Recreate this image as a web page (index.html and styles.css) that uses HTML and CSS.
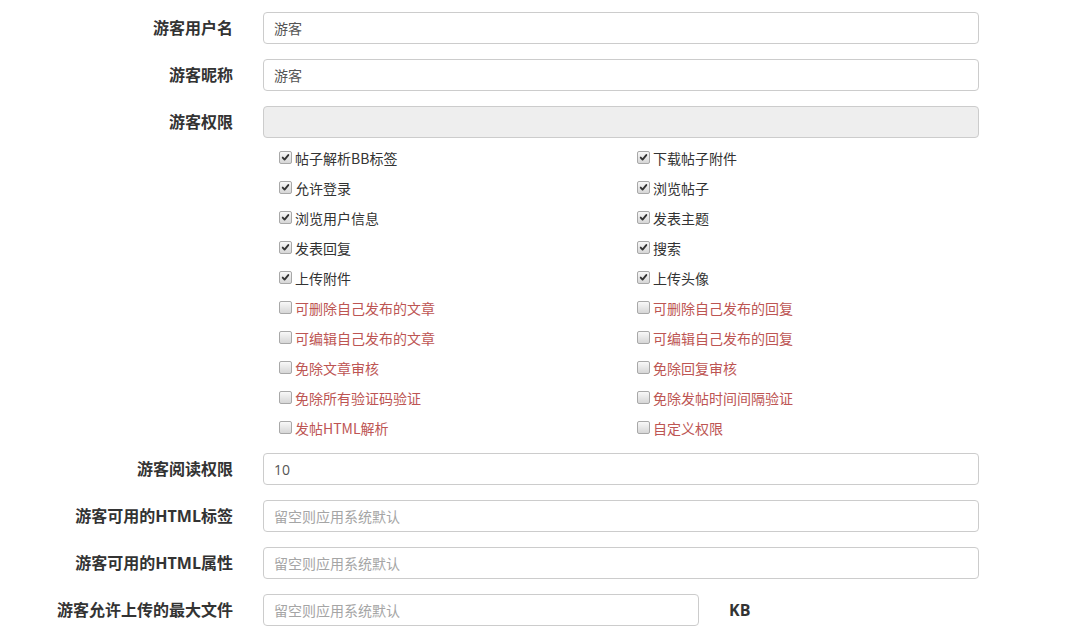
FILE: index.html
```html
<!DOCTYPE html>
<html lang="zh">
<head>
<meta charset="utf-8">
<link rel="stylesheet" href="styles.css">
</head>
<body>
<form class="form">
  <div class="row">
    <label class="lbl">游客用户名</label>
    <div class="ctl"><input class="inp" type="text" value="游客"></div>
  </div>
  <div class="row">
    <label class="lbl">游客昵称</label>
    <div class="ctl"><input class="inp" type="text" value="游客"></div>
  </div>
  <div class="row perm-row">
    <label class="lbl">游客权限</label>
    <div class="ctl">
      <input class="inp inp-disabled" type="text" disabled>
      <div class="perms">
        <div class="perm"><span class="cb on"><svg viewBox="0 0 13 13"><path d="M3.2 6.6 L5.4 9 L9.8 3.6" /></svg></span>帖子解析BB标签</div>
        <div class="perm"><span class="cb on"><svg viewBox="0 0 13 13"><path d="M3.2 6.6 L5.4 9 L9.8 3.6" /></svg></span>下载帖子附件</div>
        <div class="perm"><span class="cb on"><svg viewBox="0 0 13 13"><path d="M3.2 6.6 L5.4 9 L9.8 3.6" /></svg></span>允许登录</div>
        <div class="perm"><span class="cb on"><svg viewBox="0 0 13 13"><path d="M3.2 6.6 L5.4 9 L9.8 3.6" /></svg></span>浏览帖子</div>
        <div class="perm"><span class="cb on"><svg viewBox="0 0 13 13"><path d="M3.2 6.6 L5.4 9 L9.8 3.6" /></svg></span>浏览用户信息</div>
        <div class="perm"><span class="cb on"><svg viewBox="0 0 13 13"><path d="M3.2 6.6 L5.4 9 L9.8 3.6" /></svg></span>发表主题</div>
        <div class="perm"><span class="cb on"><svg viewBox="0 0 13 13"><path d="M3.2 6.6 L5.4 9 L9.8 3.6" /></svg></span>发表回复</div>
        <div class="perm"><span class="cb on"><svg viewBox="0 0 13 13"><path d="M3.2 6.6 L5.4 9 L9.8 3.6" /></svg></span>搜索</div>
        <div class="perm"><span class="cb on"><svg viewBox="0 0 13 13"><path d="M3.2 6.6 L5.4 9 L9.8 3.6" /></svg></span>上传附件</div>
        <div class="perm"><span class="cb on"><svg viewBox="0 0 13 13"><path d="M3.2 6.6 L5.4 9 L9.8 3.6" /></svg></span>上传头像</div>
        <div class="perm danger"><span class="cb"></span>可删除自己发布的文章</div>
        <div class="perm danger"><span class="cb"></span>可删除自己发布的回复</div>
        <div class="perm danger"><span class="cb"></span>可编辑自己发布的文章</div>
        <div class="perm danger"><span class="cb"></span>可编辑自己发布的回复</div>
        <div class="perm danger"><span class="cb"></span>免除文章审核</div>
        <div class="perm danger"><span class="cb"></span>免除回复审核</div>
        <div class="perm danger"><span class="cb"></span>免除所有验证码验证</div>
        <div class="perm danger"><span class="cb"></span>免除发帖时间间隔验证</div>
        <div class="perm danger"><span class="cb"></span>发帖HTML解析</div>
        <div class="perm danger"><span class="cb"></span>自定义权限</div>
      </div>
    </div>
  </div>
  <div class="row">
    <label class="lbl">游客阅读权限</label>
    <div class="ctl"><input class="inp" type="text" value="10"></div>
  </div>
  <div class="row">
    <label class="lbl">游客可用的HTML标签</label>
    <div class="ctl"><input class="inp" type="text" placeholder="留空则应用系统默认"></div>
  </div>
  <div class="row">
    <label class="lbl">游客可用的HTML属性</label>
    <div class="ctl"><input class="inp" type="text" placeholder="留空则应用系统默认"></div>
  </div>
  <div class="row">
    <label class="lbl">游客允许上传的最大文件</label>
    <div class="ctl ctl-unit">
      <input class="inp inp-half" type="text" placeholder="留空则应用系统默认">
      <span class="unit">KB</span>
    </div>
  </div>
</form>
</body>
</html>
```

FILE: styles.css
```css
html, body {
  margin: 0;
  padding: 0;
  background: #fff;
}
body {
  font-family: "Open Sans", "Noto Sans CJK SC", sans-serif;
  color: #333;
}
.form {
  display: flex;
  flex-direction: column;
  gap: 15px;
  padding-top: 12px;
}
.row {
  display: grid;
  grid-template-columns: 233px 716px;
  column-gap: 30px;
  align-items: start;
}
.lbl {
  font-weight: bold;
  font-size: 16px;
  line-height: 32px;
  height: 32px;
  text-align: right;
  white-space: nowrap;
  color: #333;
}
.ctl {
  display: flex;
  flex-direction: column;
}
.inp {
  box-sizing: border-box;
  width: 100%;
  height: 32px;
  margin: 0;
  padding: 0 10px;
  border: 1px solid #ccc;
  border-radius: 4px;
  font-family: "Open Sans", "Noto Sans CJK SC", sans-serif;
  font-size: 14px;
  color: #555;
  background: #fff;
  outline: none;
}
.inp::placeholder {
  color: #a5a5a5;
}
.inp-disabled {
  background: #eee;
}
.perms {
  display: grid;
  grid-template-columns: 358px 358px;
  grid-auto-rows: 30px;
  margin: 5px 0 -5px 16px;
}
.perm {
  display: flex;
  align-items: center;
  font-family: "Noto Sans CJK SC", sans-serif;
  font-size: 14px;
  color: #333;
  white-space: nowrap;
}
.perm.danger {
  color: #bd5553;
}
.cb {
  box-sizing: border-box;
  width: 13px;
  height: 13px;
  margin: -2px 3px 0 0;
  border: 1px solid #a8a8a8;
  border-radius: 2px;
  background: linear-gradient(#f8f8f8, #d6d6d6);
  display: inline-flex;
  align-items: center;
  justify-content: center;
  flex-shrink: 0;
}
.cb svg {
  width: 11px;
  height: 11px;
}
.cb svg path {
  fill: none;
  stroke: #333;
  stroke-width: 2.2;
  stroke-linecap: round;
  stroke-linejoin: round;
}
.ctl-unit {
  flex-direction: row;
  align-items: center;
  gap: 30px;
}
.inp-half {
  width: 436px;
}
.unit {
  font-weight: bold;
  font-size: 16px;
  color: #333;
}
```
